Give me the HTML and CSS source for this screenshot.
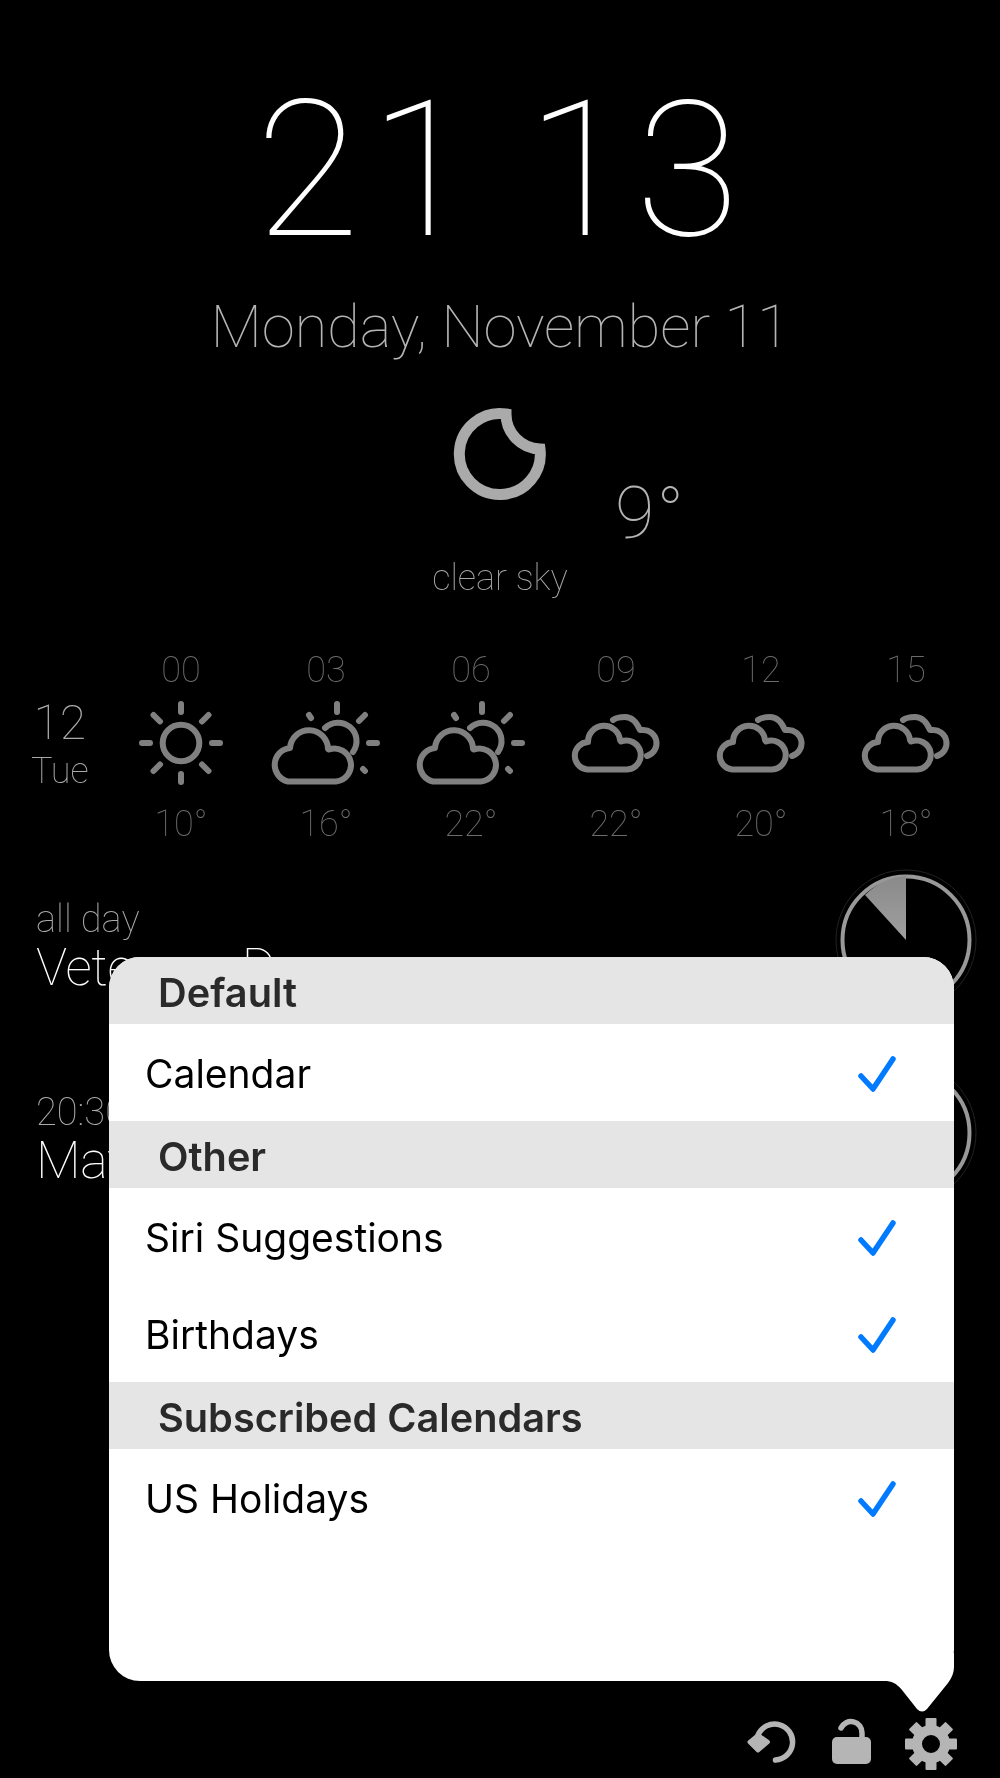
FILE: index.html
```html
<!DOCTYPE html>
<html lang="en">
<head>
<meta charset="utf-8">
<title>Clock</title>
<link rel="stylesheet" href="styles.css">
</head>
<body>
<svg class="defs" width="0" height="0">
  <defs>
    <symbol id="sun" viewBox="0 0 144 96">
      <circle cx="72" cy="48" r="18.3"/>
      <path d="M72 9V17M72 79V87M33 48H41M103 48H111M44.500 20L51 26.500M99.500 20L93 26.500M44.500 76L51 69.500M99.500 76L93 69.500"/>
    </symbol>
    <symbol id="suncloud" viewBox="0 0 144 96">
      <g transform="translate(-1 0)">
        <path d="M35 86.500H83A16.500 16.500 0 1 0 76 54.500L75 54A19.020 19.020 0 0 0 37 53A17 17 0 0 0 35 86.500Z"/>
        <path d="M72 33A18.500 18.500 0 0 1 100 57"/>
        <path d="M84 9V17M116 48H124M112 20L106 26M110 74L112 76M56 20L58 23"/>
      </g>
    </symbol>
    <symbol id="clouds" viewBox="0 0 144 96">
      <g transform="translate(-3 0)">
        <path d="M46 74.500H86A14.500 14.500 0 1 0 80 46.500L79 45A16.050 16.050 0 0 0 47 47A13.800 13.800 0 0 0 46 74.500Z"/>
        <path d="M72 25C76 22 80 22 84 22C91 22 96 28 99 35H101A13.300 13.300 0 0 1 106 61"/>
      </g>
    </symbol>
  </defs>
</svg>

<main class="screen">
  <div class="clock"><span class="clock-hours">21</span><span class="clock-minutes">13</span></div>
  <div class="date">Monday, November 11</div>

  <section class="now">
    <svg class="moon" viewBox="0 0 100 104" width="100" height="104">
      <path d="M56 12A40.500 40.500 0 1 0 90 47A35 35 0 0 1 56 12Z"/>
    </svg>
    <div class="now-temp">9°</div>
  </section>
  <div class="summary">clear sky</div>

  <section class="forecast">
    <div class="day"><div class="day-num">12</div><div class="day-name">Tue</div></div>
    <div class="slot"><div class="slot-text">00</div><svg class="wx"><use href="#sun"/></svg><div class="slot-text">10°</div></div>
    <div class="slot"><div class="slot-text">03</div><svg class="wx"><use href="#suncloud"/></svg><div class="slot-text">16°</div></div>
    <div class="slot"><div class="slot-text">06</div><svg class="wx"><use href="#suncloud"/></svg><div class="slot-text">22°</div></div>
    <div class="slot"><div class="slot-text">09</div><svg class="wx"><use href="#clouds"/></svg><div class="slot-text">22°</div></div>
    <div class="slot"><div class="slot-text">12</div><svg class="wx"><use href="#clouds"/></svg><div class="slot-text">20°</div></div>
    <div class="slot"><div class="slot-text">15</div><svg class="wx"><use href="#clouds"/></svg><div class="slot-text">18°</div></div>
  </section>

  <section class="events">
    <div class="event">
      <div class="event-text"><div class="event-time">all day</div><div class="event-title">Veterans Day</div></div>
      <svg class="dial" viewBox="0 0 144 144" width="144" height="144">
        <defs><linearGradient id="wedge" x1="0" y1="0" x2="0" y2="1"><stop offset="0" stop-color="#8a8a8a"/><stop offset="1" stop-color="#a0a0a0"/></linearGradient></defs>
        <circle class="dial-halo" cx="72" cy="72" r="70"/>
        <circle class="dial-ring" cx="72" cy="72" r="63.5"/>
        <path d="M72 72V8A64 64 0 0 0 31 27Z" fill="url(#wedge)"/>
      </svg>
    </div>
    <div class="event">
      <div class="event-text"><div class="event-time">20:30</div><div class="event-title">Match</div></div>
      <svg class="dial" viewBox="0 0 144 144" width="144" height="144">
        <circle class="dial-halo" cx="72" cy="72" r="70"/>
        <circle class="dial-ring" cx="72" cy="72" r="63.5"/>
      </svg>
    </div>
  </section>

  <nav class="toolbar">
    <svg class="tool" viewBox="0 0 60 60" width="60" height="60">
      <path class="tool-line" d="M34.500 46A18 18 0 1 0 17 21"/>
      <path class="tool-solid" d="M8.500 28L17 36.500L27 28L17 21Z"/>
    </svg>
    <svg class="tool" viewBox="0 0 60 60" width="60" height="60">
      <path class="tool-line" d="M20 14A11 11 0 0 1 41 19V26"/>
      <rect class="tool-body" x="11" y="23" width="39" height="27" rx="5"/>
    </svg>
    <svg class="tool" viewBox="-30 -30 60 60" width="60" height="60">
      <circle class="gear-disc" r="14"/>
      <g class="gear-teeth">
        <rect x="-5.500" y="-26" width="11" height="10" rx="1"/>
        <rect x="-5.500" y="-26" width="11" height="10" rx="1" transform="rotate(45)"/>
        <rect x="-5.500" y="-26" width="11" height="10" rx="1" transform="rotate(90)"/>
        <rect x="-5.500" y="-26" width="11" height="10" rx="1" transform="rotate(135)"/>
        <rect x="-5.500" y="-26" width="11" height="10" rx="1" transform="rotate(180)"/>
        <rect x="-5.500" y="-26" width="11" height="10" rx="1" transform="rotate(225)"/>
        <rect x="-5.500" y="-26" width="11" height="10" rx="1" transform="rotate(270)"/>
        <rect x="-5.500" y="-26" width="11" height="10" rx="1" transform="rotate(315)"/>
      </g>
    </svg>
  </nav>
</main>

<aside class="popover">
  <div class="sheet">
    <div class="group">Default</div>
    <div class="row"><span>Calendar</span><svg class="check" viewBox="0 0 38 36" width="38" height="36"><path d="M3 20L15 33L35 3"/></svg></div>
    <div class="group">Other</div>
    <div class="row"><span>Siri Suggestions</span><svg class="check" viewBox="0 0 38 36" width="38" height="36"><path d="M3 20L15 33L35 3"/></svg></div>
    <div class="row"><span>Birthdays</span><svg class="check" viewBox="0 0 38 36" width="38" height="36"><path d="M3 20L15 33L35 3"/></svg></div>
    <div class="group">Subscribed Calendars</div>
    <div class="row"><span>US Holidays</span><svg class="check" viewBox="0 0 38 36" width="38" height="36"><path d="M3 20L15 33L35 3"/></svg></div>
  </div>
  <svg class="tail" viewBox="0 0 80 60" width="80" height="60">
    <path d="M0 28H10C18 28 22 30 28 37L43 56Q48 61 53 56L74 30Q80 22 80 14V0H0Z"/>
  </svg>
</aside>
</body>
</html>
```

FILE: styles.css
```css
* { box-sizing: border-box; }
html, body { margin: 0; padding: 0; background: #000; }
body {
  width: 1000px;
  height: 1778px;
  overflow: hidden;
  position: relative;
  font-family: Roboto, "Liberation Sans", sans-serif;
  font-weight: 100;
}
.defs { position: absolute; }

.screen { height: 1778px; display: flex; flex-direction: column; color: #fff; will-change: transform; }

.clock {
  display: flex;
  justify-content: center;
  gap: 43px;
  margin-top: 75px;
  height: 190px;
  font-size: 190px;
  line-height: 190px;
}
.clock-hours { letter-spacing: 10px; }
.clock-minutes { letter-spacing: 5px; }
.date {
  margin-top: 27px;
  height: 70px;
  line-height: 70px;
  text-align: center;
  font-size: 60px;
  letter-spacing: -0.2px;
  color: #b4b4b4;
}
.now { display: flex; justify-content: center; height: 120px; margin-top: 40px; position: relative; }
.moon { fill: none; stroke: #aaa; stroke-width: 11; }
.now-temp {
  position: absolute;
  left: 615px;
  top: 67px;
  font-size: 72px;
  line-height: 90px;
  letter-spacing: 2px;
  color: #b4b4b4;
}
.summary { margin-top: 34px; height: 44px; line-height: 44px; text-align: center; font-size: 36px; color: #a8a8a8; }

.forecast { display: flex; margin-top: 48px; height: 198px; }
.day { width: 108.500px; padding: 48px 0 0 11px; text-align: center; color: #aaa; }
.day-num { font-size: 48px; line-height: 54px; }
.day-name { font-size: 36px; line-height: 42px; }
.slot { width: 145px; display: flex; flex-direction: column; align-items: center; }
.slot-text { font-size: 36px; line-height: 44px; height: 44px; color: #6c6c6c; }
.wx { width: 144px; height: 96px; fill: none; stroke: #808080; stroke-width: 6; stroke-linecap: round; stroke-linejoin: round; }
.slot .slot-text:last-child { margin-top: 11px; }
.slot .slot-text:first-child { margin-bottom: 3px; }

.events { margin-top: 22px; padding-right: 22px; }
.event { display: flex; justify-content: space-between; height: 193px; }
.event-text { padding: 31px 0 0 36px; }
.event-time { font-size: 38px; line-height: 40px; color: #aaa; }
.event-title { font-size: 52px; line-height: 58px; letter-spacing: -0.4px; color: #fff; }
.dial { flex: none; }
.dial-halo { fill: none; stroke: #222; stroke-width: 1; }
.dial-ring { fill: none; stroke: #999; stroke-width: 4; }

.toolbar { margin-top: auto; display: flex; justify-content: flex-end; gap: 20px; padding: 0 39px 4px 0; }
.tool { flex: none; }
.tool-line { fill: none; stroke: #b5b5b5; stroke-width: 5.500; stroke-linecap: round; }
.tool-solid { fill: #b5b5b5; stroke: #b5b5b5; stroke-width: 4; stroke-linejoin: round; }
.tool-body { fill: #b5b5b5; }
.gear-disc { fill: none; stroke: #b5b5b5; stroke-width: 10; }
.gear-teeth { fill: #b5b5b5; }

.popover { position: absolute; left: 109px; top: 957px; width: 845px; height: 724px; font-family: Inter, Roboto, sans-serif; }
.sheet { height: 100%; background: #fff; border-radius: 31px; overflow: hidden; }
.group {
  height: 67px;
  line-height: 72px;
  padding-left: 49px;
  background: #e5e5e5;
  color: #2a2a2a;
  font-size: 39.700px;
  font-weight: 600;
}
.row {
  height: 97px;
  display: flex;
  align-items: center;
  justify-content: space-between;
  padding: 2px 58px 0 36px;
  color: #000;
  font-size: 39px;
  font-weight: 400;
}
.check { fill: none; stroke: #007aff; stroke-width: 5.500; stroke-linecap: round; stroke-linejoin: round; }
.tail { position: absolute; right: 0; bottom: -32px; fill: #fff; }
```
